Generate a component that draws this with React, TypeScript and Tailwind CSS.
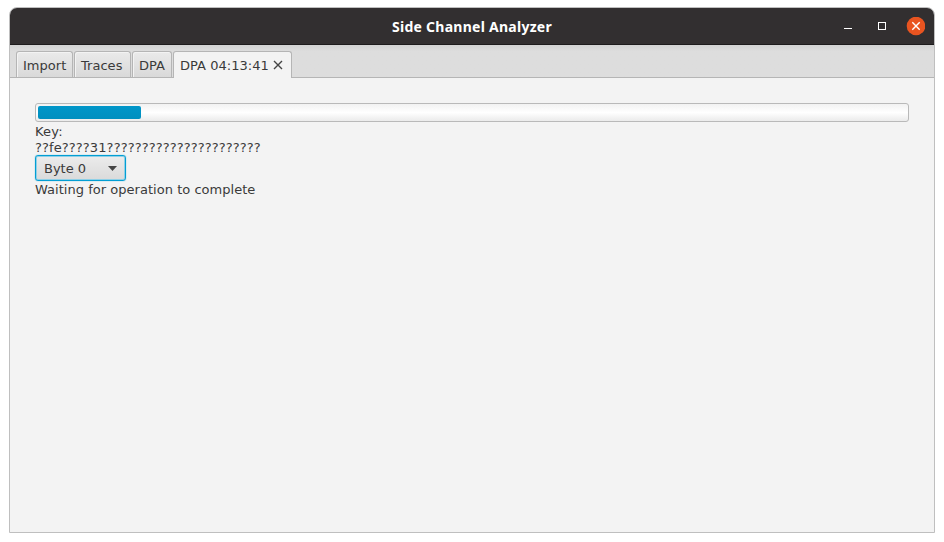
import type { ReactNode } from 'react';

const tabs = [
  { name: 'Import', width: 'w-[57px]' },
  { name: 'Traces', width: 'w-[57px]' },
  { name: 'DPA', width: 'w-[40px]' },
];

function Tab({ children, width }: { children: ReactNode; width: string }) {
  return (
    <button
      className={`${width} h-[26px] rounded-t-[3px] border border-b-0 border-[#b5b5b5] bg-gradient-to-b from-[#eaeaea] to-[#d9d9d9] pt-px pl-[6px] text-left leading-[26px] tracking-[0.03px] whitespace-nowrap shadow-[inset_1px_1px_0_#f3f3f3]`}
    >
      {children}
    </button>
  );
}

export default function App() {
  return (
    <div className="h-[542px] w-[944px] overflow-hidden bg-white pt-[7px] pl-[9px] font-['DejaVu_Sans',sans-serif] text-[13px] text-[#3a3a3a]">
      <div className="flex h-[526px] w-[926px] flex-col overflow-hidden rounded-t-[8px] border border-[#bfbfbf] bg-[#f3f3f3]">
        <header className="flex h-[37px] shrink-0 items-center border-b border-[#1d1b1c] bg-[#322f30]">
          <div className="w-[230px]" />
          <h1 className="flex-1 pt-[1px] text-center font-['Noto_Sans',sans-serif] text-[14px] font-bold tracking-[0.26px] text-white">
            <span className="whitespace-nowrap">Side Channel Analyzer</span>
          </h1>
          <div className="flex w-[230px] items-center justify-end pt-[2px] pr-[9px]">
            <svg width="82" height="20" viewBox="0 0 82 20" fill="none" stroke="white">
              <path d="M1 11.5h8" />
              <rect x="35.5" y="5.5" width="7" height="7" />
              <circle cx="73" cy="9" r="9.3" fill="#e95420" stroke="none" />
              <path d="M69.3 5.3l7.4 7.4M76.7 5.3l-7.4 7.4" strokeWidth="1.4" />
            </svg>
          </div>
        </header>
        <nav className="flex h-[33px] shrink-0 items-end gap-px border-b border-[#b5b5b5] bg-gradient-to-b from-[#d2d2d2] to-[#dddddd] to-20% pl-[6px]">
          {tabs.map((tab) => (
            <Tab key={tab.name} width={tab.width}>
              {tab.name}
            </Tab>
          ))}
          <button className="-mb-px flex h-[27px] w-[119px] items-center rounded-t-[3px] border border-b-0 border-[#b5b5b5] bg-[#f3f3f3] pl-[6px] text-left leading-[26px] tracking-[0.03px] whitespace-nowrap">
            <span className="w-[93px] pt-px">DPA 04:13:41</span>
            <svg width="10" height="10" viewBox="0 0 10 10" stroke="#444444" strokeWidth="1.4">
              <path d="M1 1l8 8M9 1l-8 8" />
            </svg>
          </button>
        </nav>
        <main className="flex flex-col items-start px-[25px] pt-[25px]">
          <div className="h-[19px] w-full rounded-[3px] border border-[#b9b9b9] bg-gradient-to-b from-[#f2f2f2] via-white to-[#ebebeb] p-[2px]">
            <div className="h-[13px] w-[103px] rounded-[2px] bg-gradient-to-b from-[#0096c9] to-[#008fbf]" />
          </div>
          <p className="h-4 pt-[2px] leading-[16px] tracking-[0.2px]">Key:</p>
          <p className="h-4 pt-[2px] leading-[16px] tracking-[0.11px]">??fe????31??????????????????????</p>
          <button className="mt-px flex h-[26px] w-[91px] items-center justify-between rounded-[3px] border border-[#039ed3] bg-gradient-to-b from-[#ececec] to-[#dadada] pr-[8px] pl-[8px] shadow-[0_0_1px_#039ed3,inset_0_0_0_1px_#8fd0e7]">
            <span className="pt-[2px]">Byte 0</span>
            <svg width="9" height="5" viewBox="0 0 9 5" fill="#444444">
              <path d="M0 0h9L4.5 5z" />
            </svg>
          </button>
          <p className="h-4 pt-px leading-[16px] tracking-[0.03px]">Waiting for operation to complete</p>
        </main>
      </div>
    </div>
  );
}
